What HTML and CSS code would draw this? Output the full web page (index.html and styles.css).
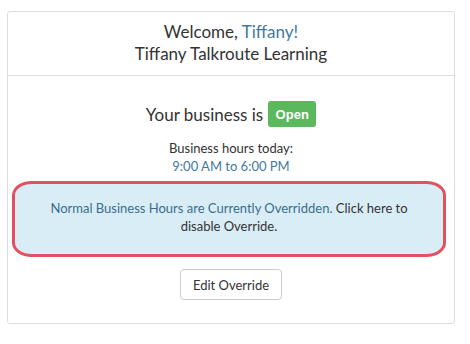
FILE: index.html
```html
<!DOCTYPE html>
<html>
<head>
<meta charset="utf-8">
<link rel="stylesheet" href="styles.css">
</head>
<body>
<div class="card">
  <div class="card-head">
    <div class="line">Welcome, <span class="name">Tiffany!</span></div>
    <div class="line">Tiffany Talkroute Learning</div>
  </div>
  <div class="card-body">
    <div class="status">
      <span>Your business is</span>
      <span class="badge">Open</span>
    </div>
    <div class="hours">
      <div>Business hours today:</div>
      <div class="time">9:00 AM to 6:00 PM</div>
    </div>
    <div class="alert">
      <span class="info">Normal Business Hours are Currently Overridden.</span> <span>Click here to</span><br><span>disable Override.</span>
    </div>
    <div class="actions">
      <button class="btn">Edit Override</button>
    </div>
  </div>
</div>
</body>
</html>
```
FILE: styles.css
```css
html, body {
  margin: 0;
  padding: 0;
  background: #fff;
}
body {
  font-family: Lato, "Open Sans", sans-serif;
  color: #333;
  padding: 11px 0 0 7px;
}
.card {
  width: 446px;
  border: 1px solid #ddd;
  border-radius: 3px;
  box-sizing: content-box;
}
.card-head {
  padding: 9px 15px 10px;
  border-bottom: 1px solid #ddd;
  text-align: center;
  font-size: 17px;
  line-height: 22px;
}
.name {
  color: #42799f;
}
.card-body {
  padding: 25px 0 23px;
  text-align: center;
}
.status {
  display: flex;
  justify-content: center;
  align-items: center;
  gap: 5px;
  font-size: 17px;
  height: 26px;
}
.badge {
  display: inline-flex;
  align-items: center;
  justify-content: center;
  width: 48px;
  height: 26px;
  background: #5cb85c;
  color: #fff;
  border-radius: 3px;
  font-family: "Liberation Sans", Arial, sans-serif;
  font-weight: bold;
  font-size: 13px;
}
.hours {
  margin-top: 12px;
  font-size: 13px;
  line-height: 18px;
}
.time {
  color: #42799f;
}
.alert {
  margin: 6px 8px 0 4px;
  height: 76px;
  box-sizing: border-box;
  padding: 15px 16px 0;
  background: #d9edf7;
  border: 3px solid #e4505f;
  border-radius: 20px / 14px;
  font-size: 13px;
  line-height: 18px;
  color: #333;
}
.info {
  color: #3a6d8c;
}
.actions {
  margin-top: 12px;
}
.btn {
  width: 102px;
  height: 31px;
  background: #fff;
  border: 1px solid #ccc;
  border-radius: 4px;
  font-family: Lato, sans-serif;
  font-size: 13px;
  color: #333;
  padding: 0;
}
```
